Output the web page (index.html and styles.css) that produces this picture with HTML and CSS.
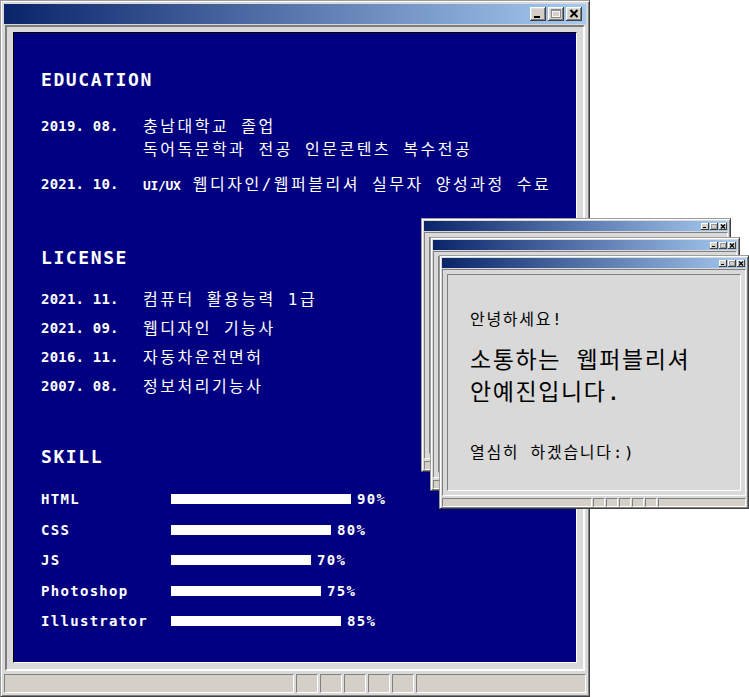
FILE: index.html
```html
<!DOCTYPE html>
<html lang="ko">
<head>
<meta charset="utf-8">
<title>Portfolio</title>
<link rel="stylesheet" href="styles.css">
</head>
<body>
<div class="desk">
  <section class="win main-win">
    <header class="titlebar">
      <div class="tb-btns">
        <span class="tb-btn"><svg width="16" height="14" viewBox="0 0 16 14"><rect x="4" y="9" width="6" height="2" fill="#000"/></svg></span>
        <span class="tb-btn"><svg width="16" height="14" viewBox="0 0 16 14"><rect x="3.5" y="2.5" width="9" height="8" fill="none" stroke="#8c8c8c"/><rect x="4" y="3" width="8" height="1" fill="#8c8c8c"/><rect x="4.5" y="4.5" width="7" height="5" fill="none" stroke="#f4f4f4"/></svg></span>
        <span class="tb-btn"><svg width="16" height="14" viewBox="0 0 16 14"><path d="M4.5 3 L11.5 10 M11.5 3 L4.5 10" stroke="#000" stroke-width="2" fill="none"/></svg></span>
      </div>
    </header>
    <div class="frame">
      <div class="screen">
        <section class="block block-edu">
          <h2 class="heading">EDUCATION</h2>
          <ul class="entries entries-edu">
            <li class="entry"><span class="date">2019. 08.</span><span class="desc">충남대학교 졸업<br>독어독문학과 전공 인문콘텐츠 복수전공</span></li>
            <li class="entry"><span class="date">2021. 10.</span><span class="desc"><span class="latin">UI/UX</span> 웹디자인/웹퍼블리셔 실무자 양성과정 수료</span></li>
          </ul>
        </section>
        <section class="block block-license">
          <h2 class="heading">LICENSE</h2>
          <ul class="entries entries-license">
            <li class="entry"><span class="date">2021. 11.</span><span class="desc">컴퓨터 활용능력 1급</span></li>
            <li class="entry"><span class="date">2021. 09.</span><span class="desc">웹디자인 기능사</span></li>
            <li class="entry"><span class="date">2016. 11.</span><span class="desc">자동차운전면허</span></li>
            <li class="entry"><span class="date">2007. 08.</span><span class="desc">정보처리기능사</span></li>
          </ul>
        </section>
        <section class="block block-skill">
          <h2 class="heading">SKILL</h2>
          <ul class="skills">
            <li class="skill"><span class="skill-name">HTML</span><span class="bar" style="width:180px"></span><span class="pct">90%</span></li>
            <li class="skill"><span class="skill-name">CSS</span><span class="bar" style="width:160px"></span><span class="pct">80%</span></li>
            <li class="skill"><span class="skill-name">JS</span><span class="bar" style="width:140px"></span><span class="pct">70%</span></li>
            <li class="skill"><span class="skill-name">Photoshop</span><span class="bar" style="width:150px"></span><span class="pct">75%</span></li>
            <li class="skill"><span class="skill-name">Illustrator</span><span class="bar" style="width:170px"></span><span class="pct">85%</span></li>
          </ul>
        </section>
      </div>
    </div>
    <footer class="statusbar">
      <span class="cell cell-main"></span>
      <span class="cell cell-sm"></span>
      <span class="cell cell-sm"></span>
      <span class="cell cell-sm"></span>
      <span class="cell cell-sm"></span>
      <span class="cell cell-sm"></span>
      <span class="cell cell-end"></span>
    </footer>
  </section>

  <div class="win popup popup-1">
    <header class="titlebar">
      <div class="mini-btns">
        <span class="mini-btn"><svg width="8" height="7" viewBox="0 0 8 7"><rect x="2" y="4" width="3" height="1" fill="#000"/></svg></span>
        <span class="mini-btn"><svg width="8" height="7" viewBox="0 0 8 7"><rect x="1.5" y="1.5" width="5" height="4" fill="none" stroke="#9a9a9a"/></svg></span>
        <span class="mini-btn"><svg width="8" height="7" viewBox="0 0 8 7"><path d="M2 1.5 L6 5.5 M6 1.5 L2 5.5" stroke="#000" stroke-width="1.2" fill="none"/></svg></span>
      </div>
    </header>
    <div class="popup-frame"><div class="panel"></div></div>
    <footer class="statusbar">
      <span class="cell cell-main"></span><span class="cell cell-xs"></span><span class="cell cell-xs"></span><span class="cell cell-xs"></span><span class="cell cell-xs"></span><span class="cell cell-xs"></span><span class="cell cell-tail"></span>
    </footer>
  </div>

  <div class="win popup popup-2">
    <header class="titlebar">
      <div class="mini-btns">
        <span class="mini-btn"><svg width="8" height="7" viewBox="0 0 8 7"><rect x="2" y="4" width="3" height="1" fill="#000"/></svg></span>
        <span class="mini-btn"><svg width="8" height="7" viewBox="0 0 8 7"><rect x="1.5" y="1.5" width="5" height="4" fill="none" stroke="#9a9a9a"/></svg></span>
        <span class="mini-btn"><svg width="8" height="7" viewBox="0 0 8 7"><path d="M2 1.5 L6 5.5 M6 1.5 L2 5.5" stroke="#000" stroke-width="1.2" fill="none"/></svg></span>
      </div>
    </header>
    <div class="popup-frame"><div class="panel"></div></div>
    <footer class="statusbar">
      <span class="cell cell-main"></span><span class="cell cell-xs"></span><span class="cell cell-xs"></span><span class="cell cell-xs"></span><span class="cell cell-xs"></span><span class="cell cell-xs"></span><span class="cell cell-tail"></span>
    </footer>
  </div>

  <div class="win popup popup-3">
    <header class="titlebar">
      <div class="mini-btns">
        <span class="mini-btn"><svg width="8" height="7" viewBox="0 0 8 7"><rect x="2" y="4" width="3" height="1" fill="#000"/></svg></span>
        <span class="mini-btn"><svg width="8" height="7" viewBox="0 0 8 7"><rect x="1.5" y="1.5" width="5" height="4" fill="none" stroke="#9a9a9a"/></svg></span>
        <span class="mini-btn"><svg width="8" height="7" viewBox="0 0 8 7"><path d="M2 1.5 L6 5.5 M6 1.5 L2 5.5" stroke="#000" stroke-width="1.2" fill="none"/></svg></span>
      </div>
    </header>
    <div class="popup-frame">
      <div class="panel">
        <p class="greet">안녕하세요!</p>
        <p class="intro">소통하는 웹퍼블리셔<br>안예진입니다.</p>
        <p class="closing">열심히 하겠습니다:)</p>
      </div>
    </div>
    <footer class="statusbar">
      <span class="cell cell-main"></span><span class="cell cell-xs"></span><span class="cell cell-xs"></span><span class="cell cell-xs"></span><span class="cell cell-xs"></span><span class="cell cell-xs"></span><span class="cell cell-tail"></span>
    </footer>
  </div>
</div>
</body>
</html>
```

FILE: styles.css
```css
* { box-sizing: border-box; }

html, body {
  margin: 0;
  padding: 0;
}

body {
  background: #fff;
  font-family: "DejaVu Sans Mono", "Noto Sans CJK KR", monospace;
}

.desk {
  position: relative;
  width: 749px;
  height: 697px;
  overflow: hidden;
}

/* ---------- generic window ---------- */
.win {
  display: flex;
  flex-direction: column;
  background: #d9d9d9;
  border: 1px solid;
  border-color: #9c9c9c #404040 #404040 #9c9c9c;
  box-shadow: inset 1px 1px 0 #fff, inset -1px -1px 0 #808080;
}

.titlebar {
  flex: none;
  display: flex;
  justify-content: flex-end;
  align-items: center;
  background: linear-gradient(90deg, #0a246a 0%, #a6caf0 100%);
}

.cell {
  display: block;
  background: #d4d0c8;
  border: 1px solid;
  border-color: #808080 #fff #fff #808080;
}

.cell-main { flex: 1; }

.statusbar {
  flex: none;
  display: flex;
}

/* ---------- main window ---------- */
.main-win {
  width: 590px;
  height: 697px;
  padding: 3px;
}

.main-win .titlebar {
  height: 20px;
  padding-right: 4px;
}

.tb-btns {
  display: flex;
  gap: 2px;
}

.tb-btn {
  display: block;
  width: 16px;
  height: 14px;
  background: #d4d0c8;
  box-shadow: inset -1px -1px 0 #404040, inset 1px 1px 0 #fff,
              inset -2px -2px 0 #808080, inset 2px 2px 0 #dfdfdf;
}

.tb-btn svg { display: block; }

.frame {
  flex: 1;
  display: flex;
  margin: 1px 1px 0;
  border: 2px solid;
  border-color: #7c7c7c #fff #fff #7c7c7c;
  padding: 5px 6px 6px;
}

.screen {
  flex: 1;
  background: #000080;
  border: 1px solid;
  border-color: #000 #fff #fff #000;
  padding: 37px 0 0 27px;
  color: #fff;
}

.main-win .statusbar {
  height: 19px;
  margin-top: 3px;
  gap: 2px;
}

.cell-sm { width: 22px; }
.cell-end { width: 170px; }

/* ---------- resume content ---------- */
.heading {
  margin: 0;
  font-size: 18px;
  font-weight: bold;
  line-height: 20px;
  letter-spacing: 1.6px;
}

.entries {
  list-style: none;
  margin: 0;
  padding: 0;
}

.entry {
  display: grid;
  grid-template-columns: 102px 1fr;
  align-items: start;
}

.date {
  font-size: 14px;
  font-weight: bold;
  letter-spacing: 0.2px;
  white-space: pre;
}

.desc {
  font-size: 16px;
  letter-spacing: 2.5px;
  white-space: nowrap;
}

.latin {
  font-size: 13px;
  font-weight: bold;
  letter-spacing: -0.3px;
}

.block-edu .heading { margin-bottom: 25px; }
.entries-edu { display: flex; flex-direction: column; gap: 12px; }
.entries-edu .entry { line-height: 23px; }

.block-license { margin-top: 51px; }
.block-license .heading { margin-bottom: 17px; }
.entries-license .entry { line-height: 29px; }

.block-skill { margin-top: 46px; }
.block-skill .heading { margin-bottom: 17px; }

.skills {
  list-style: none;
  margin: 0;
  padding: 0;
}

.skill {
  display: flex;
  align-items: center;
  height: 30.5px;
  font-size: 14px;
  font-weight: bold;
  letter-spacing: 1.3px;
}

.skill-name { width: 130px; flex: none; }

.bar {
  display: block;
  height: 10px;
  background: #fff;
  flex: none;
}

.pct { margin-left: 6px; }

/* ---------- popup windows ---------- */
.popup {
  position: absolute;
  width: 310px;
  height: 254px;
  padding: 2px 2px 1px;
}

.popup-1 { left: 421px; top: 218px; }
.popup-2 { left: 430px; top: 237px; }
.popup-3 { left: 439px; top: 255px; }

.popup .titlebar {
  height: 10px;
  padding-right: 1px;
}

.mini-btns {
  display: flex;
  gap: 1px;
}

.mini-btn {
  display: block;
  width: 8px;
  height: 7px;
  background: #d4d0c8;
  box-shadow: inset -1px -1px 0 #404040, inset 1px 1px 0 #fff;
}

.mini-btn svg { display: block; }

.popup-frame {
  flex: 1;
  display: flex;
  margin-top: 1px;
  border: 1px solid;
  border-color: #808080 #fff #fff #808080;
  padding: 4px;
}

.panel {
  flex: 1;
  background: #d9d9d9;
  border: 1px solid;
  border-color: #808080 #fff #fff #808080;
  padding: 35px 0 0 22px;
  color: #000;
}

.popup .statusbar {
  height: 9px;
  margin-top: 2px;
  gap: 1px;
}

.cell-xs { width: 12px; }
.cell-tail { width: 88px; }

.greet,
.closing {
  margin: 0;
  font-size: 16px;
  line-height: 20px;
  letter-spacing: 1.7px;
  white-space: nowrap;
}

.intro {
  margin: 14px 0 0;
  font-size: 23px;
  line-height: 32px;
  letter-spacing: 1.6px;
  white-space: nowrap;
}

.closing { margin-top: 35px; }
```
